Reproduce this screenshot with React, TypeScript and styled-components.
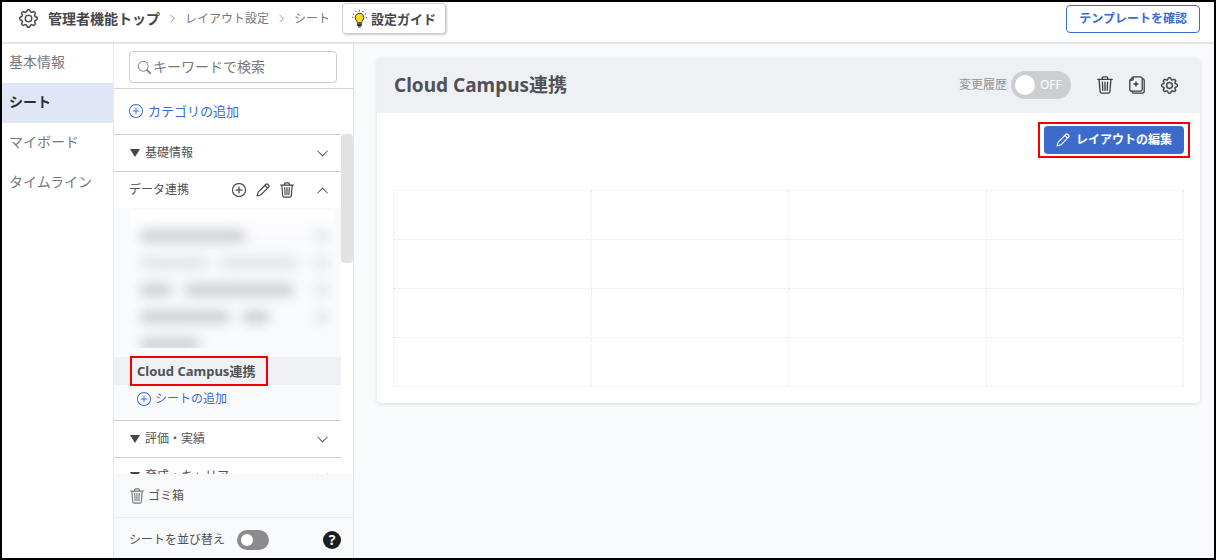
import React from 'react';
import styled, { createGlobalStyle, css } from 'styled-components';
import { BsGear, BsSearch, BsPlusCircle, BsChevronDown, BsChevronUp, BsChevronRight } from 'react-icons/bs';

const GlobalStyle = createGlobalStyle`
  *, *::before, *::after { box-sizing: border-box; }
  body {
    margin: 0;
    color: #505155;
    font: 12px/18px "Noto Sans", "Noto Sans CJK JP", sans-serif;
  }
  button, input { font: inherit; color: inherit; }
  a { color: inherit; text-decoration: none; }
`;

const Frame = styled.div`
  display: flex;
  flex-direction: column;
  height: 100vh;
  border: 2px solid #000;
  background: #fff;
`;

const TopBar = styled.header`
  display: flex;
  align-items: center;
  justify-content: space-between;
  flex: none;
  height: 42px;
  padding: 0 14px 7px 17px;
  border-bottom: 2px solid #e4e5e7;
`;

const Crumbs = styled.nav`
  display: flex;
  align-items: center;
  gap: 8px;
  color: #77787c;
`;

const HomeCrumb = styled.a`
  display: flex;
  align-items: center;
  gap: 10px;
  font-size: 14px;
  font-weight: 700;
  color: #46474b;
`;

const GuideButton = styled.button`
  display: flex;
  align-items: center;
  gap: 4px;
  height: 31px;
  margin-left: 4px;
  padding: 0 9px;
  border: 1px solid #cfcfcf;
  border-radius: 4px;
  background: #fff;
  box-shadow: 1px 1px 2px rgba(0, 0, 0, 0.2);
  font-size: 13px;
  font-weight: 700;
  color: #46474b;
`;

const TemplateButton = styled.button`
  height: 28px;
  padding: 0 12px;
  border: 1px solid #3a6bd0;
  border-radius: 4px;
  background: #fff;
  font-weight: 700;
  color: #3a6bd0;
`;

const Body = styled.div`
  display: flex;
  flex: 1;
  min-height: 0;
`;

const MainMenu = styled.nav`
  flex: none;
  width: 112px;
  border-right: 1px solid #e9e9eb;
`;

const MenuLink = styled.a<{ $active?: boolean }>`
  display: flex;
  align-items: center;
  height: 40px;
  padding: 0 7px 3px;
  font-size: 14px;
  color: #77787c;
  &:first-child { height: 39px; }
  ${(p) => p.$active && css`
    background: #dfe6f5;
    font-weight: 700;
    color: #2e2f33;
  `}
`;

const SidePanel = styled.aside`
  display: flex;
  flex-direction: column;
  flex: none;
  width: 240px;
  border-right: 1px solid #e4e5e7;
`;

const SearchArea = styled.div`
  padding: 7px 16px 5px 15px;
  border-bottom: 1px solid #d3d4d6;
`;

const SearchBox = styled.label`
  display: flex;
  align-items: center;
  gap: 2px;
  height: 32px;
  padding: 0 8px;
  border: 1px solid #c9cacd;
  border-radius: 4px;
  font-size: 14px;
  color: #77787c;
  svg { flex: none; }
  input {
    flex: 1;
    min-width: 0;
    padding: 0;
    border: 0;
    outline: 0;
    background: none;
  }
  input::placeholder { color: #77787c; opacity: 1; }
`;

const AddButton = styled.button<{ $large?: boolean }>`
  display: flex;
  align-items: center;
  gap: ${(p) => (p.$large ? 5 : 4)}px;
  flex: none;
  height: ${(p) => (p.$large ? 45 : 28)}px;
  padding: 0 ${(p) => (p.$large ? 15 : 23)}px;
  padding-bottom: ${(p) => (p.$large ? 2 : 0)}px;
  border: 0;
  background: none;
  font-size: ${(p) => (p.$large ? 13 : 12)}px;
  color: #3a6bd0;
`;

const Scroller = styled.div`
  display: flex;
  flex: 1;
  min-height: 0;
`;

const CategoryList = styled.div`
  flex: 1;
  overflow: hidden;
`;

const Track = styled.div`
  flex: none;
  width: 12px;
`;

const Thumb = styled.div`
  height: 38%;
  border-radius: 4px;
  background: #e2e2e2;
`;

const CategoryRow = styled.div`
  display: flex;
  align-items: center;
  justify-content: space-between;
  height: 37px;
  padding: 0 12px 0 15px;
  border-top: 1px solid #cdced0;
`;

const CategoryName = styled.span`
  display: flex;
  align-items: center;
  gap: 5px;
`;

const Triangle = styled.span`
  margin-left: 1px;
  border: solid transparent;
  border-width: 8px 5px 0;
  border-top-color: #46474b;
`;

const Tools = styled.div<{ $gap: number }>`
  display: flex;
  align-items: center;
  gap: ${(p) => p.$gap}px;
`;

const IconButton = styled.button`
  display: flex;
  padding: 0;
  border: 0;
  background: none;
  color: #3d3e42;
`;

const SheetGroup = styled.div`
  height: 212px;
  padding-top: 2px;
  background: #f9fafc;
`;

const HiddenSheets = styled.div`
  height: 138px;
  margin: 0 8px 9px 17px;
  padding: 12px 4px 0 9px;
  overflow: hidden;
  background: linear-gradient(#fff, #f9fafc 30px);
`;

const HiddenRow = styled.div`
  display: flex;
  align-items: center;
  justify-content: space-between;
  height: 27px;
`;

const Smudge = styled.span<{ $dark?: boolean }>`
  height: 12px;
  border-radius: 6px;
  background: ${(p) => (p.$dark ? '#cbccce' : '#e2e3e5')};
  filter: blur(6px);
`;

const Words = styled.span`
  display: flex;
  gap: 12px;
`;

const SheetRow = styled.div`
  display: flex;
  align-items: center;
  height: 28px;
  padding-left: 18px;
  background: #eef0f4;
`;

const SheetLink = styled.a`
  min-width: 134px;
  padding: 4px 5px;
  outline: 2px solid #f00000;
  font-size: 13px;
  font-weight: 700;
`;

const TrashRow = styled.a`
  display: flex;
  align-items: center;
  gap: 4px;
  flex: none;
  height: 43px;
  padding: 0 16px;
  background: #f8f9fb;
  svg { color: #77787c; }
`;

const SortRow = styled.div`
  display: flex;
  align-items: center;
  justify-content: space-between;
  flex: none;
  height: 41px;
  padding: 3px 12px 0 15px;
  border-top: 1px solid #eceded;
  background: #f8f9fb;
`;

const SwitchLabel = styled.label<{ $gap: number; $muted?: boolean }>`
  display: flex;
  align-items: center;
  gap: ${(p) => p.$gap}px;
  ${(p) => p.$muted && 'color: #919296;'}
`;

const SmallSwitch = styled.input`
  appearance: none;
  display: flex;
  align-items: center;
  width: 32px;
  height: 20px;
  margin: 0;
  padding: 4px;
  border-radius: 10px;
  background: #8b8b8f;
  &::before {
    content: "";
    width: 12px;
    height: 12px;
    border-radius: 50%;
    background: #fff;
  }
  &:checked { justify-content: flex-end; background: #3a6bd0; }
`;

const WideSwitch = styled.input`
  appearance: none;
  display: flex;
  align-items: center;
  gap: 5px;
  width: 60px;
  height: 28px;
  margin: 0;
  padding: 4px;
  border-radius: 14px;
  background: #cdced0;
  color: #fff;
  &::before {
    content: "";
    width: 20px;
    height: 20px;
    border-radius: 50%;
    background: #fff;
  }
  &::after { content: "OFF"; }
  &:checked { flex-direction: row-reverse; background: #3a6bd0; }
  &:checked::after { content: "ON"; }
`;

const Help = styled.button`
  width: 18px;
  height: 18px;
  padding: 0;
  border: 0;
  border-radius: 50%;
  background: #1c1d20;
  font-size: 14px;
  font-weight: 700;
  line-height: 18px;
  color: #fff;
`;

const Main = styled.main`
  flex: 1;
  min-width: 0;
  padding: 14px 14px 14px 23px;
  background: #f9fafc;
`;

const Card = styled.section`
  border-radius: 4px;
  background: #fff;
  box-shadow: 0 1px 4px rgba(0, 0, 0, 0.12);
`;

const CardHeader = styled.div`
  display: flex;
  align-items: center;
  justify-content: space-between;
  height: 55px;
  padding: 0 22px 1px 17px;
  border-radius: 4px 4px 0 0;
  background: #eef0f4;
`;

const CardTitle = styled.h1`
  margin: 0;
  font-size: 19px;
  line-height: 24px;
  font-weight: 700;
`;

const CardBody = styled.div`
  display: flex;
  flex-direction: column;
  padding: 9px 16px 16px;
`;

const EditMark = styled.div`
  align-self: flex-end;
  margin: 0 -6px 32px 0;
  padding: 2px 4px;
  border: 2px solid #f00000;
`;

const EditButton = styled.button`
  display: flex;
  align-items: center;
  gap: 6px;
  height: 28px;
  padding: 0 12px;
  border: 0;
  border-radius: 4px;
  background: #3d6bcc;
  font-weight: 700;
  color: #fff;
`;

const LayoutGrid = styled.div`
  display: grid;
  grid-template-columns: repeat(4, 1fr);
  grid-auto-rows: 49px;
  border: dotted #e9e9eb;
  border-width: 1px 0 0 1px;
`;

const Cell = styled.div`
  border: dotted #e9e9eb;
  border-width: 0 1px 1px 0;
`;

const TrashIcon = ({ width = 14, height = 16 }: { width?: number; height?: number }) => (
  <svg width={width} height={height} viewBox="0 0 16 18" fill="none" stroke="currentColor" strokeWidth="1.3" strokeLinecap="round" strokeLinejoin="round" aria-hidden="true">
    <path d="M.8 3.4h14.4M5.2 3.2V2.1c0-.8.5-1.3 1.3-1.3h3c.8 0 1.3.5 1.3 1.3v1.1M2.1 3.6l1 12.2c.1.9.6 1.4 1.5 1.4h6.8c.9 0 1.4-.5 1.5-1.4l1-12.2M5.4 6.2l.4 8.2M8 6.2v8.2M10.6 6.2l-.4 8.2" />
  </svg>
);

const PencilIcon = () => (
  <svg width="14" height="14" viewBox="0 0 16 16" fill="none" stroke="currentColor" strokeWidth="1.3" strokeLinejoin="round" aria-hidden="true">
    <path d="M1.2 14.8l1.3-4.4 9-9c.5-.5 1.2-.5 1.7 0l1.4 1.4c.5.5.5 1.2 0 1.7l-9 9zM10.2 2.8l3 3" />
  </svg>
);

const CopyIcon = () => (
  <svg width="16" height="18" viewBox="0 0 16 18" fill="none" stroke="currentColor" strokeWidth="1.3" strokeLinejoin="round" aria-hidden="true">
    <path d="M4.2.8h7.2c1.2 0 1.8.6 1.8 1.8v10.8c0 1.2-.6 1.8-1.8 1.8H2.6c-1.2 0-1.8-.6-1.8-1.8V4.2zM.8 4.2h2.2c.8 0 1.2-.4 1.2-1.2V.8M13.4 2.6c1.2 0 1.8.6 1.8 1.8v11c0 1.2-.6 1.8-1.8 1.8H5c-1.2 0-1.8-.6-1.8-1.8" />
    <path d="M7 5.6v5M4.5 8.1h5" strokeWidth="1.5" />
  </svg>
);

const BulbIcon = () => (
  <svg width="15" height="18" viewBox="0 0 15 18" fill="none" stroke="#333" strokeLinecap="round" aria-hidden="true">
    <path d="M5.3 12.4c0-1.6-2-2.4-2-4.9a4.2 4.2 0 0 1 8.4 0c0 2.5-2 3.3-2 4.9z" fill="#ffd91a" strokeWidth="1" />
    <path d="M5.5 14h4M5.7 15.4h3.6M6.7 16.8h1.6" strokeWidth="1.3" />
    <path d="M7.5 1V.6M4.2 1.8L4 1.4M10.8 1.8l.2-.4M1.8 4.2l-.5-.3M13.2 4.2l.5-.3M1 7.3H.6M14 7.3h.4" strokeWidth="1" />
  </svg>
);

const hiddenSheets: { words: number[]; dark?: boolean; icon?: boolean }[] = [
  { words: [106], dark: true, icon: true },
  { words: [68, 78], icon: true },
  { words: [32, 110], dark: true, icon: true },
  { words: [90, 28], dark: true, icon: true },
  { words: [60], dark: true },
];

const Category = ({ name }: { name: string }) => (
  <CategoryRow>
    <CategoryName><Triangle />{name}</CategoryName>
    <IconButton aria-label={`${name}を開く`}><BsChevronDown size={13} /></IconButton>
  </CategoryRow>
);

export default function App() {
  return (
    <>
      <GlobalStyle />
      <Frame>
        <TopBar>
          <Crumbs>
            <HomeCrumb href="#top"><BsGear size={19} strokeWidth={0.3} />管理者機能トップ</HomeCrumb>
            <BsChevronRight size={9} />
            <a href="#layout">レイアウト設定</a>
            <BsChevronRight size={9} />
            <a href="#sheet">シート</a>
            <GuideButton><BulbIcon />設定ガイド</GuideButton>
          </Crumbs>
          <TemplateButton>テンプレートを確認</TemplateButton>
        </TopBar>
        <Body>
          <MainMenu>
            <MenuLink href="#basic">基本情報</MenuLink>
            <MenuLink href="#sheet" $active>シート</MenuLink>
            <MenuLink href="#board">マイボード</MenuLink>
            <MenuLink href="#timeline">タイムライン</MenuLink>
          </MainMenu>
          <SidePanel>
            <SearchArea>
              <SearchBox>
                <BsSearch size={13} />
                <input type="text" aria-label="キーワードで検索" placeholder="キーワードで検索" />
              </SearchBox>
            </SearchArea>
            <AddButton $large><BsPlusCircle size={14} />カテゴリの追加</AddButton>
            <Scroller>
              <CategoryList>
                <Category name="基礎情報" />
                <CategoryRow>
                  <CategoryName>データ連携</CategoryName>
                  <Tools $gap={22}>
                    <Tools $gap={10}>
                      <IconButton aria-label="追加"><BsPlusCircle size={14} strokeWidth={0.3} /></IconButton>
                      <IconButton aria-label="編集"><PencilIcon /></IconButton>
                      <IconButton aria-label="削除"><TrashIcon /></IconButton>
                    </Tools>
                    <IconButton aria-label="閉じる"><BsChevronUp size={13} /></IconButton>
                  </Tools>
                </CategoryRow>
                <SheetGroup>
                  <HiddenSheets aria-hidden="true">
                    {hiddenSheets.map((row, i) => (
                      <HiddenRow key={i}>
                        <Words>
                          {row.words.map((w, j) => <Smudge key={j} $dark={row.dark} style={{ width: w }} />)}
                        </Words>
                        {row.icon && <Smudge style={{ width: 14 }} />}
                      </HiddenRow>
                    ))}
                  </HiddenSheets>
                  <SheetRow><SheetLink href="#cloud-campus">Cloud Campus連携</SheetLink></SheetRow>
                  <AddButton><BsPlusCircle size={14} />シートの追加</AddButton>
                </SheetGroup>
                <Category name="評価・実績" />
                <Category name="育成・キャリア" />
              </CategoryList>
              <Track><Thumb /></Track>
            </Scroller>
            <TrashRow href="#trash"><TrashIcon />ゴミ箱</TrashRow>
            <SortRow>
              <SwitchLabel $gap={12}>シートを並び替え<SmallSwitch type="checkbox" role="switch" /></SwitchLabel>
              <Help aria-label="ヘルプ">?</Help>
            </SortRow>
          </SidePanel>
          <Main>
            <Card>
              <CardHeader>
                <CardTitle>Cloud Campus連携</CardTitle>
                <Tools $gap={26}>
                  <SwitchLabel $gap={4} $muted>変更履歴<WideSwitch type="checkbox" role="switch" /></SwitchLabel>
                  <Tools $gap={16}>
                    <IconButton aria-label="削除"><TrashIcon width={16} height={18} /></IconButton>
                    <IconButton aria-label="複製"><CopyIcon /></IconButton>
                    <IconButton aria-label="設定"><BsGear size={17} strokeWidth={0.4} /></IconButton>
                  </Tools>
                </Tools>
              </CardHeader>
              <CardBody>
                <EditMark>
                  <EditButton><PencilIcon />レイアウトの編集</EditButton>
                </EditMark>
                <LayoutGrid>
                  {Array.from({ length: 16 }, (_, i) => <Cell key={i} />)}
                </LayoutGrid>
              </CardBody>
            </Card>
          </Main>
        </Body>
      </Frame>
    </>
  );
}
